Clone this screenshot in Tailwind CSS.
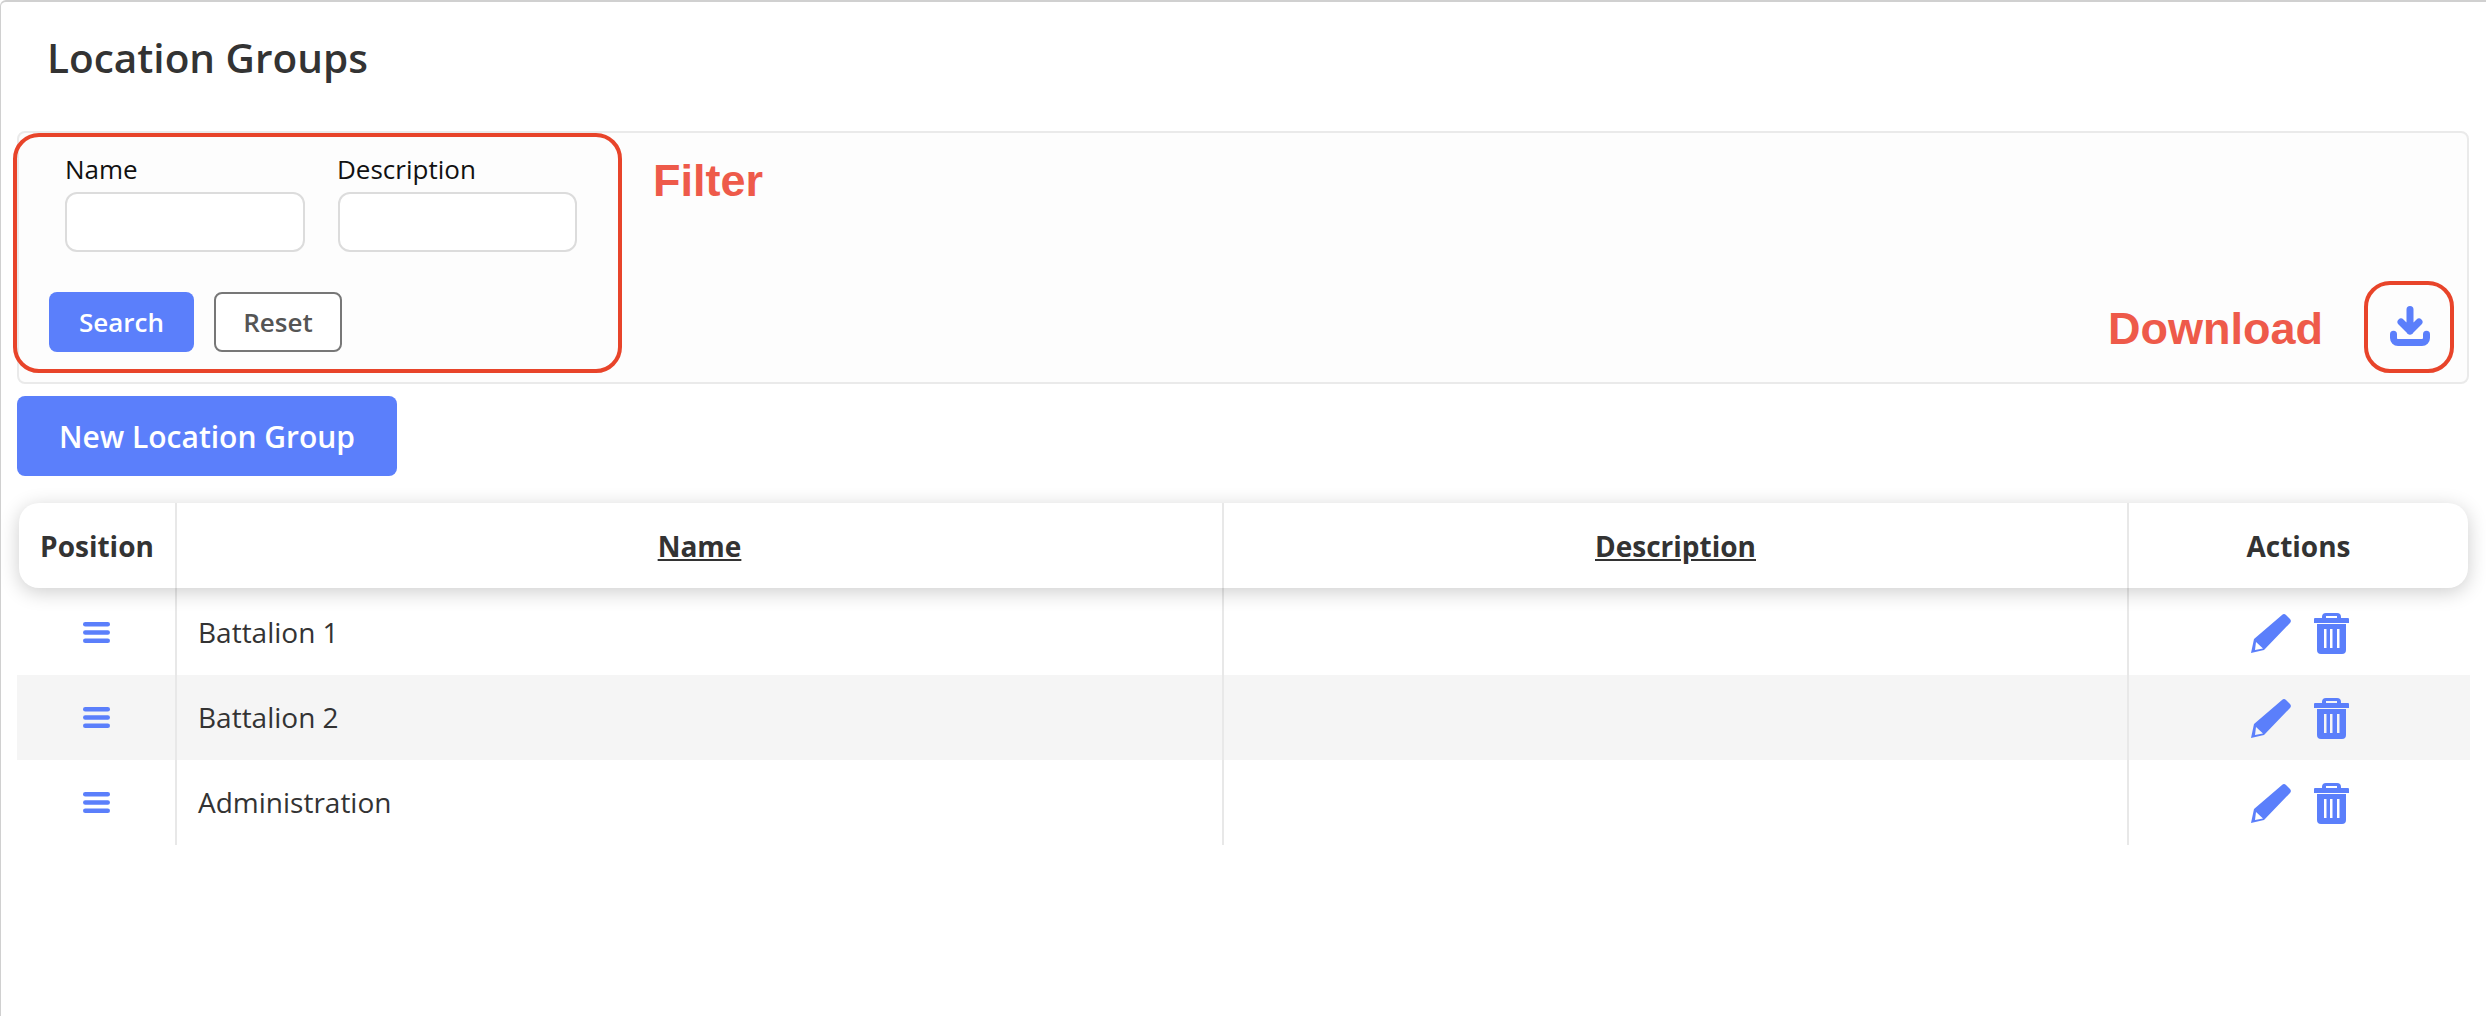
<!DOCTYPE html>
<html lang="en">
<head>
    <meta charset="UTF-8">
    <title>Location Groups</title>
    <script src="https://cdn.jsdelivr.net/npm/@tailwindcss/browser@4"></script>
</head>
<body class="bg-white font-['Open_Sans',sans-serif] text-[#333]">
    <div class="relative h-[1016px] overflow-hidden border-t-2 border-l border-[#d0d0d0] rounded-tl-md">
        <h1 class="pl-[46px] pt-[30px] h-[129px] text-[40.500px] leading-[52px] font-semibold">Location Groups</h1>

        <!-- filter panel -->
        <div class="relative ml-[16px] mr-[17px] h-[253px] border-2 border-[#eaeaea] rounded-lg bg-[#fdfdfd]">
            <div class="flex gap-[33px] pl-[46px] pt-[19px]">
                <div>
                    <label class="block text-[26px] leading-[34px] text-[#111]">Name</label>
                    <input type="text" class="block mt-[6px] w-[240px] h-[60px] border-2 border-[#dcdcdc] rounded-[12px] bg-white">
                </div>
                <div>
                    <label class="block text-[26px] leading-[34px] text-[#111] -ml-[1px]">Description</label>
                    <input type="text" class="block mt-[6px] w-[239px] h-[60px] border-2 border-[#dcdcdc] rounded-[12px] bg-white">
                </div>
            </div>
            <div class="flex gap-[20px] pl-[30px] pt-[40px]">
                <button class="w-[145px] h-[60px] bg-[#5b7ffb] rounded-lg text-white text-[26px] font-semibold">Search</button>
                <button class="w-[128px] h-[60px] border-2 border-[#777] rounded-lg bg-white text-[#555] text-[26px] font-semibold">Reset</button>
            </div>

            <!-- download icon -->
            <svg class="absolute right-[37px] top-[173px] w-[40px] h-[40px]" viewBox="0 0 40 40" fill="none" stroke="#5b7ffb" stroke-linecap="round" stroke-linejoin="round">
                <path stroke-width="7" d="M20 3.500V25M11 16l9 9 9-9"/>
                <path stroke-width="7" d="M3.500 28.200V32a4.500 4.500 0 0 0 4.500 4.500h24a4.500 4.500 0 0 0 4.500-4.500V28.200"/>
            </svg>

            <!-- red annotations -->
            <div class="absolute left-[-6px] top-0 w-[609px] h-[240px] border-4 border-[#e8442a] rounded-[26px]"></div>
            <span class="absolute left-[634px] top-[23px] font-['Liberation_Sans',sans-serif] font-bold text-[45px] leading-[50px] text-[#ee5a4a]">Filter</span>
            <span class="absolute left-[2089px] top-[171px] font-['Liberation_Sans',sans-serif] font-bold text-[45px] leading-[50px] text-[#ee5a4a]">Download</span>
            <div class="absolute left-[2345px] top-[148px] w-[90px] h-[92px] border-4 border-[#e8442a] rounded-[26px]"></div>
        </div>

        <button class="block ml-[16px] mt-[12px] w-[380px] h-[80px] bg-[#5b7ffb] rounded-lg text-white text-[30px] font-semibold">New Location Group</button>

        <!-- table -->
        <div class="ml-[16px] mr-[16px] mt-[27px]">
            <div class="mx-[2px] grid grid-cols-[158px_1047px_905px_1fr] h-[85px] bg-white rounded-[20px] shadow-[0_4px_20px_rgba(0,0,0,0.2)] relative text-[28px] font-bold items-stretch text-center">
                <div class="flex items-center justify-center border-r-2 border-[#e8e8e8]">Position</div>
                <div class="flex items-center justify-center border-r-2 border-[#e8e8e8] underline">Name</div>
                <div class="flex items-center justify-center border-r-2 border-[#e8e8e8] underline">Description</div>
                <div class="flex items-center justify-center">Actions</div>
            </div>

            <div class="grid grid-cols-[160px_1047px_905px_1fr] h-[87px] text-[28px]">
                <div class="flex items-center justify-center border-r-2 border-[#e8e8e8] pt-[2px]">
                    <svg class="w-[27px] h-[21px]" viewBox="0 0 27 21" fill="#5b7ffb"><rect width="27" height="4.500" rx="2.250"/><rect y="8.250" width="27" height="4.500" rx="2.250"/><rect y="16.500" width="27" height="4.500" rx="2.250"/></svg>
                </div>
                <div class="flex items-center pl-[21px] border-r-2 border-[#e8e8e8]">Battalion 1</div>
                <div class="border-r-2 border-[#e8e8e8]"></div>
                <div class="flex items-center justify-center gap-[23px] pt-[3px]">
                    <svg class="w-[40px] h-[40px]" viewBox="0 0 40 40" fill="#5b7ffb"><path fill-rule="evenodd" d="M0 40 3 26 31 2a3 3 0 0 1 4 0l4 4a3 3 0 0 1 0 4L13 37ZM5 29l-1 8 8-1.500Z"/></svg>
                    <svg class="w-[35px] h-[41px]" viewBox="0 0 35 41" fill="#5b7ffb"><path fill-rule="evenodd" d="M12 0h11a4 4 0 0 1 4 4v1h7a1 1 0 0 1 1 1v4H0V6a1 1 0 0 1 1-1h7V4a4 4 0 0 1 4-4Zm0 3v2h11V3Z"/><path fill-rule="evenodd" d="M3 11h29v26a4 4 0 0 1-4 4H7a4 4 0 0 1-4-4Zm7 5v19h2.500V16Zm6 0v19h2.500V16Zm7 0v19h2.500V16Z"/></svg>
                </div>
            </div>
            <div class="grid grid-cols-[160px_1047px_905px_1fr] h-[85px] text-[28px] bg-[#f5f5f5]">
                <div class="flex items-center justify-center border-r-2 border-[#e8e8e8]">
                    <svg class="w-[27px] h-[21px]" viewBox="0 0 27 21" fill="#5b7ffb"><rect width="27" height="4.500" rx="2.250"/><rect y="8.250" width="27" height="4.500" rx="2.250"/><rect y="16.500" width="27" height="4.500" rx="2.250"/></svg>
                </div>
                <div class="flex items-center pl-[21px] pb-[1px] border-r-2 border-[#e8e8e8]">Battalion 2</div>
                <div class="border-r-2 border-[#e8e8e8]"></div>
                <div class="flex items-center justify-center gap-[23px] pt-[1px]">
                    <svg class="w-[40px] h-[40px]" viewBox="0 0 40 40" fill="#5b7ffb"><path fill-rule="evenodd" d="M0 40 3 26 31 2a3 3 0 0 1 4 0l4 4a3 3 0 0 1 0 4L13 37ZM5 29l-1 8 8-1.500Z"/></svg>
                    <svg class="w-[35px] h-[41px]" viewBox="0 0 35 41" fill="#5b7ffb"><path fill-rule="evenodd" d="M12 0h11a4 4 0 0 1 4 4v1h7a1 1 0 0 1 1 1v4H0V6a1 1 0 0 1 1-1h7V4a4 4 0 0 1 4-4Zm0 3v2h11V3Z"/><path fill-rule="evenodd" d="M3 11h29v26a4 4 0 0 1-4 4H7a4 4 0 0 1-4-4Zm7 5v19h2.500V16Zm6 0v19h2.500V16Zm7 0v19h2.500V16Z"/></svg>
                </div>
            </div>
            <div class="grid grid-cols-[160px_1047px_905px_1fr] h-[85px] text-[28px]">
                <div class="flex items-center justify-center border-r-2 border-[#e8e8e8]">
                    <svg class="w-[27px] h-[21px]" viewBox="0 0 27 21" fill="#5b7ffb"><rect width="27" height="4.500" rx="2.250"/><rect y="8.250" width="27" height="4.500" rx="2.250"/><rect y="16.500" width="27" height="4.500" rx="2.250"/></svg>
                </div>
                <div class="flex items-center pl-[21px] pb-[1px] border-r-2 border-[#e8e8e8]">Administration</div>
                <div class="border-r-2 border-[#e8e8e8]"></div>
                <div class="flex items-center justify-center gap-[23px] pt-[1px]">
                    <svg class="w-[40px] h-[40px]" viewBox="0 0 40 40" fill="#5b7ffb"><path fill-rule="evenodd" d="M0 40 3 26 31 2a3 3 0 0 1 4 0l4 4a3 3 0 0 1 0 4L13 37ZM5 29l-1 8 8-1.500Z"/></svg>
                    <svg class="w-[35px] h-[41px]" viewBox="0 0 35 41" fill="#5b7ffb"><path fill-rule="evenodd" d="M12 0h11a4 4 0 0 1 4 4v1h7a1 1 0 0 1 1 1v4H0V6a1 1 0 0 1 1-1h7V4a4 4 0 0 1 4-4Zm0 3v2h11V3Z"/><path fill-rule="evenodd" d="M3 11h29v26a4 4 0 0 1-4 4H7a4 4 0 0 1-4-4Zm7 5v19h2.500V16Zm6 0v19h2.500V16Zm7 0v19h2.500V16Z"/></svg>
                </div>
            </div>
        </div>
    </div>
</body>
</html>
